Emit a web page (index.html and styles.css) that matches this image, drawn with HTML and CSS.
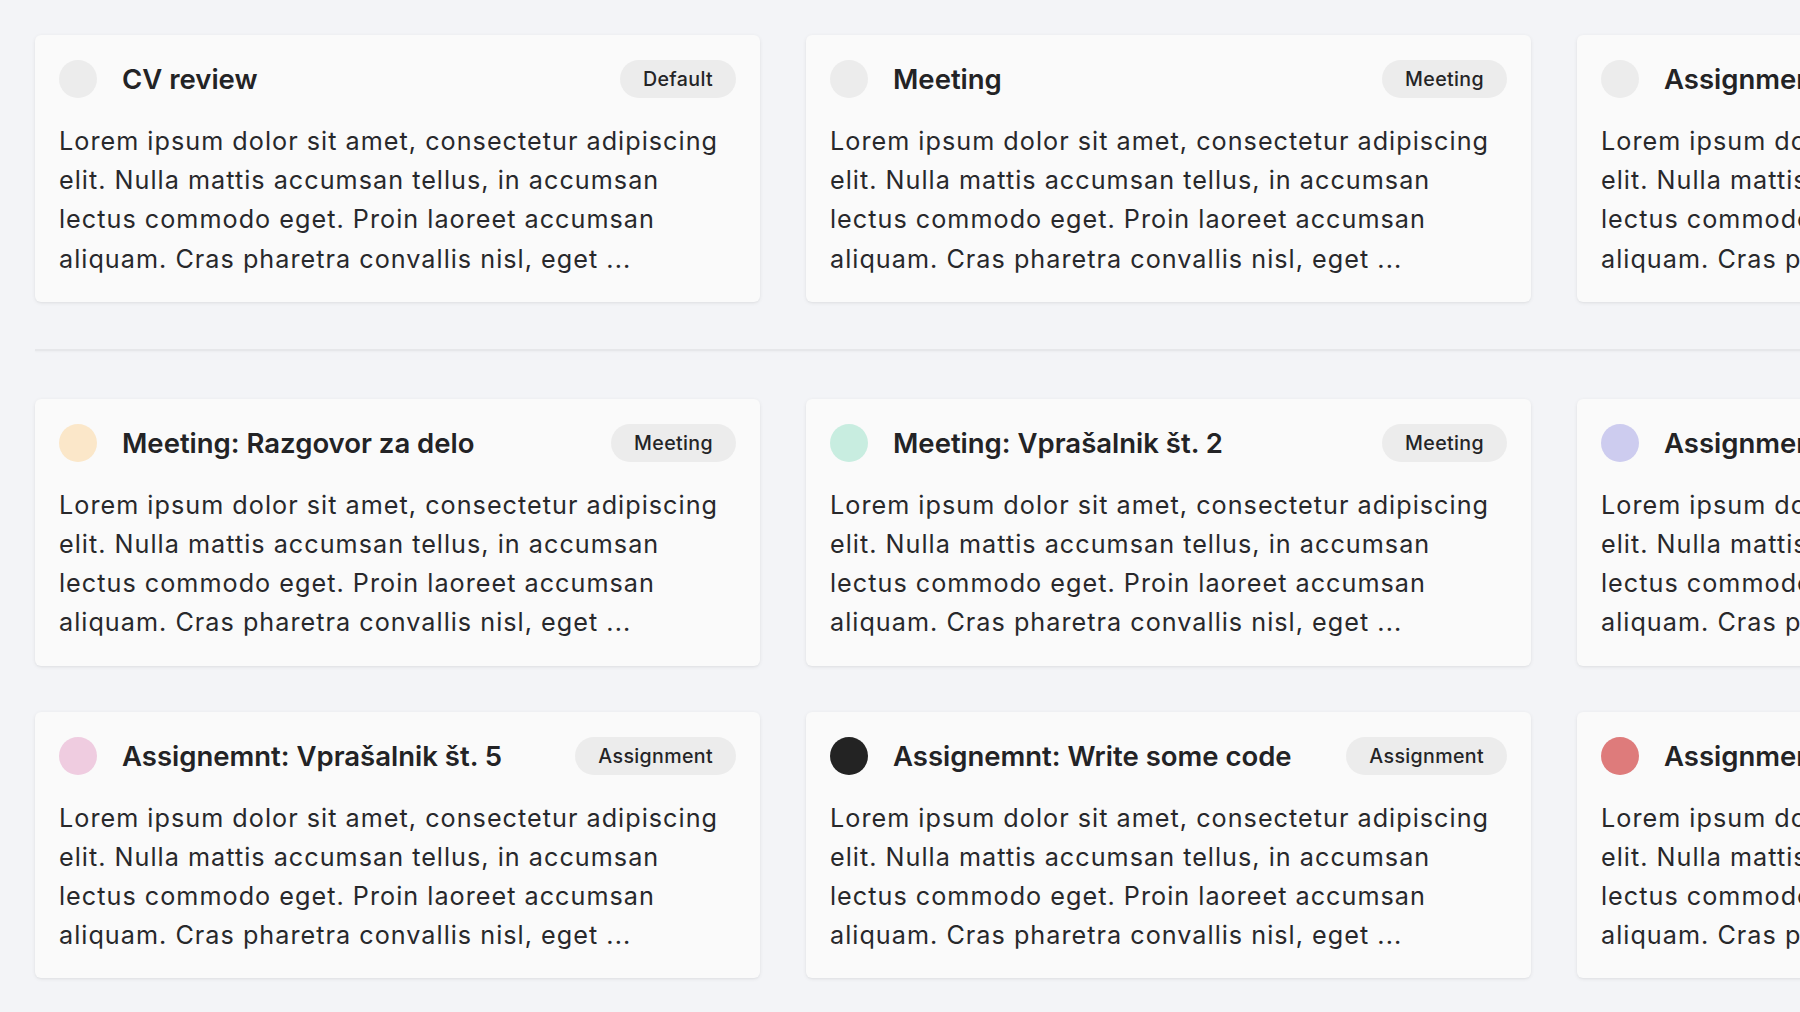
FILE: index.html
```html
<!DOCTYPE html>
<html lang="en">
<head>
<meta charset="utf-8">
<title>Events</title>
<link rel="stylesheet" href="styles.css">
</head>
<body>
<main class="page">
  <section class="grid">
    <article class="card">
      <header class="card-head"><span class="dot dot-grey"></span><h2 class="title">CV review</h2><span class="badge">Default</span></header>
      <p class="text">Lorem ipsum dolor sit amet, consectetur adipiscing elit. Nulla mattis accumsan tellus, in accumsan lectus commodo eget. Proin laoreet accumsan aliquam. Cras pharetra convallis nisl, eget ...</p>
    </article>
    <article class="card">
      <header class="card-head"><span class="dot dot-grey"></span><h2 class="title">Meeting</h2><span class="badge">Meeting</span></header>
      <p class="text">Lorem ipsum dolor sit amet, consectetur adipiscing elit. Nulla mattis accumsan tellus, in accumsan lectus commodo eget. Proin laoreet accumsan aliquam. Cras pharetra convallis nisl, eget ...</p>
    </article>
    <article class="card">
      <header class="card-head"><span class="dot dot-grey"></span><h2 class="title">Assignment</h2><span class="badge">Assignment</span></header>
      <p class="text">Lorem ipsum dolor sit amet, consectetur adipiscing elit. Nulla mattis accumsan tellus, in accumsan lectus commodo eget. Proin laoreet accumsan aliquam. Cras pharetra convallis nisl, eget ...</p>
    </article>
  </section>

  <hr class="divider">

  <section class="grid">
    <article class="card">
      <header class="card-head"><span class="dot dot-peach"></span><h2 class="title">Meeting: Razgovor za delo</h2><span class="badge">Meeting</span></header>
      <p class="text">Lorem ipsum dolor sit amet, consectetur adipiscing elit. Nulla mattis accumsan tellus, in accumsan lectus commodo eget. Proin laoreet accumsan aliquam. Cras pharetra convallis nisl, eget ...</p>
    </article>
    <article class="card">
      <header class="card-head"><span class="dot dot-mint"></span><h2 class="title">Meeting: Vprašalnik št. 2</h2><span class="badge">Meeting</span></header>
      <p class="text">Lorem ipsum dolor sit amet, consectetur adipiscing elit. Nulla mattis accumsan tellus, in accumsan lectus commodo eget. Proin laoreet accumsan aliquam. Cras pharetra convallis nisl, eget ...</p>
    </article>
    <article class="card">
      <header class="card-head"><span class="dot dot-lavender"></span><h2 class="title">Assignment: Vprašalnik</h2><span class="badge">Assignment</span></header>
      <p class="text">Lorem ipsum dolor sit amet, consectetur adipiscing elit. Nulla mattis accumsan tellus, in accumsan lectus commodo eget. Proin laoreet accumsan aliquam. Cras pharetra convallis nisl, eget ...</p>
    </article>
    <article class="card">
      <header class="card-head"><span class="dot dot-pink"></span><h2 class="title">Assignemnt: Vprašalnik št. 5</h2><span class="badge">Assignment</span></header>
      <p class="text">Lorem ipsum dolor sit amet, consectetur adipiscing elit. Nulla mattis accumsan tellus, in accumsan lectus commodo eget. Proin laoreet accumsan aliquam. Cras pharetra convallis nisl, eget ...</p>
    </article>
    <article class="card">
      <header class="card-head"><span class="dot dot-black"></span><h2 class="title">Assignemnt: Write some code</h2><span class="badge">Assignment</span></header>
      <p class="text">Lorem ipsum dolor sit amet, consectetur adipiscing elit. Nulla mattis accumsan tellus, in accumsan lectus commodo eget. Proin laoreet accumsan aliquam. Cras pharetra convallis nisl, eget ...</p>
    </article>
    <article class="card">
      <header class="card-head"><span class="dot dot-red"></span><h2 class="title">Assignment: Review</h2><span class="badge">Assignment</span></header>
      <p class="text">Lorem ipsum dolor sit amet, consectetur adipiscing elit. Nulla mattis accumsan tellus, in accumsan lectus commodo eget. Proin laoreet accumsan aliquam. Cras pharetra convallis nisl, eget ...</p>
    </article>
  </section>
</main>
</body>
</html>
```

FILE: styles.css
```css
html, body {
  margin: 0;
  padding: 0;
}

body {
  background: #f3f4f7;
  font-family: Inter, "Noto Sans", "Liberation Sans", sans-serif;
  color: #242426;
  overflow: hidden;
  width: 1800px;
  height: 1012px;
}

.page {
  padding: 35px 0 0 35px;
  width: 2400px;
}

.grid {
  display: grid;
  grid-template-columns: repeat(3, 725px);
  column-gap: 46px;
  row-gap: 46px;
}

.divider {
  border: 0;
  height: 2px;
  background: #e6e7ea;
  margin: 47px 0 48px 0;
  box-shadow: 0 1px 2px rgba(0, 0, 0, 0.03);
}

.card {
  background: #fafafa;
  border-radius: 6px;
  padding: 25px 24px 23px 24px;
  box-shadow: 0 1px 4px rgba(0, 0, 0, 0.07), 0 1px 2px rgba(0, 0, 0, 0.03);
  display: flex;
  flex-direction: column;
  gap: 24px;
}

.card-head {
  display: flex;
  align-items: center;
  height: 38px;
}

.dot {
  width: 38px;
  height: 38px;
  border-radius: 50%;
  flex: 0 0 38px;
  margin-right: 25px;
}

.dot-grey { background: #ececec; }
.dot-peach { background: #fbe7c9; }
.dot-mint { background: #c8ede0; }
.dot-lavender { background: #cdccef; }
.dot-pink { background: #efcce0; }
.dot-black { background: #232323; }
.dot-red { background: #de7b7b; }

.title {
  margin: 0;
  font-size: 27.5px;
  font-weight: 600;
  line-height: 38px;
  color: #232325;
  white-space: nowrap;
}

.badge {
  margin-left: auto;
  background: #ececec;
  border-radius: 19px;
  height: 38px;
  line-height: 38px;
  padding: 0 23px;
  font-size: 19.6px;
  font-weight: 500;
  letter-spacing: 0.35px;
  color: #242426;
  white-space: nowrap;
}

.text {
  margin: 0;
  font-size: 25.2px;
  line-height: 39.2px;
  letter-spacing: 1.02px;
  color: #28282b;
}
```
